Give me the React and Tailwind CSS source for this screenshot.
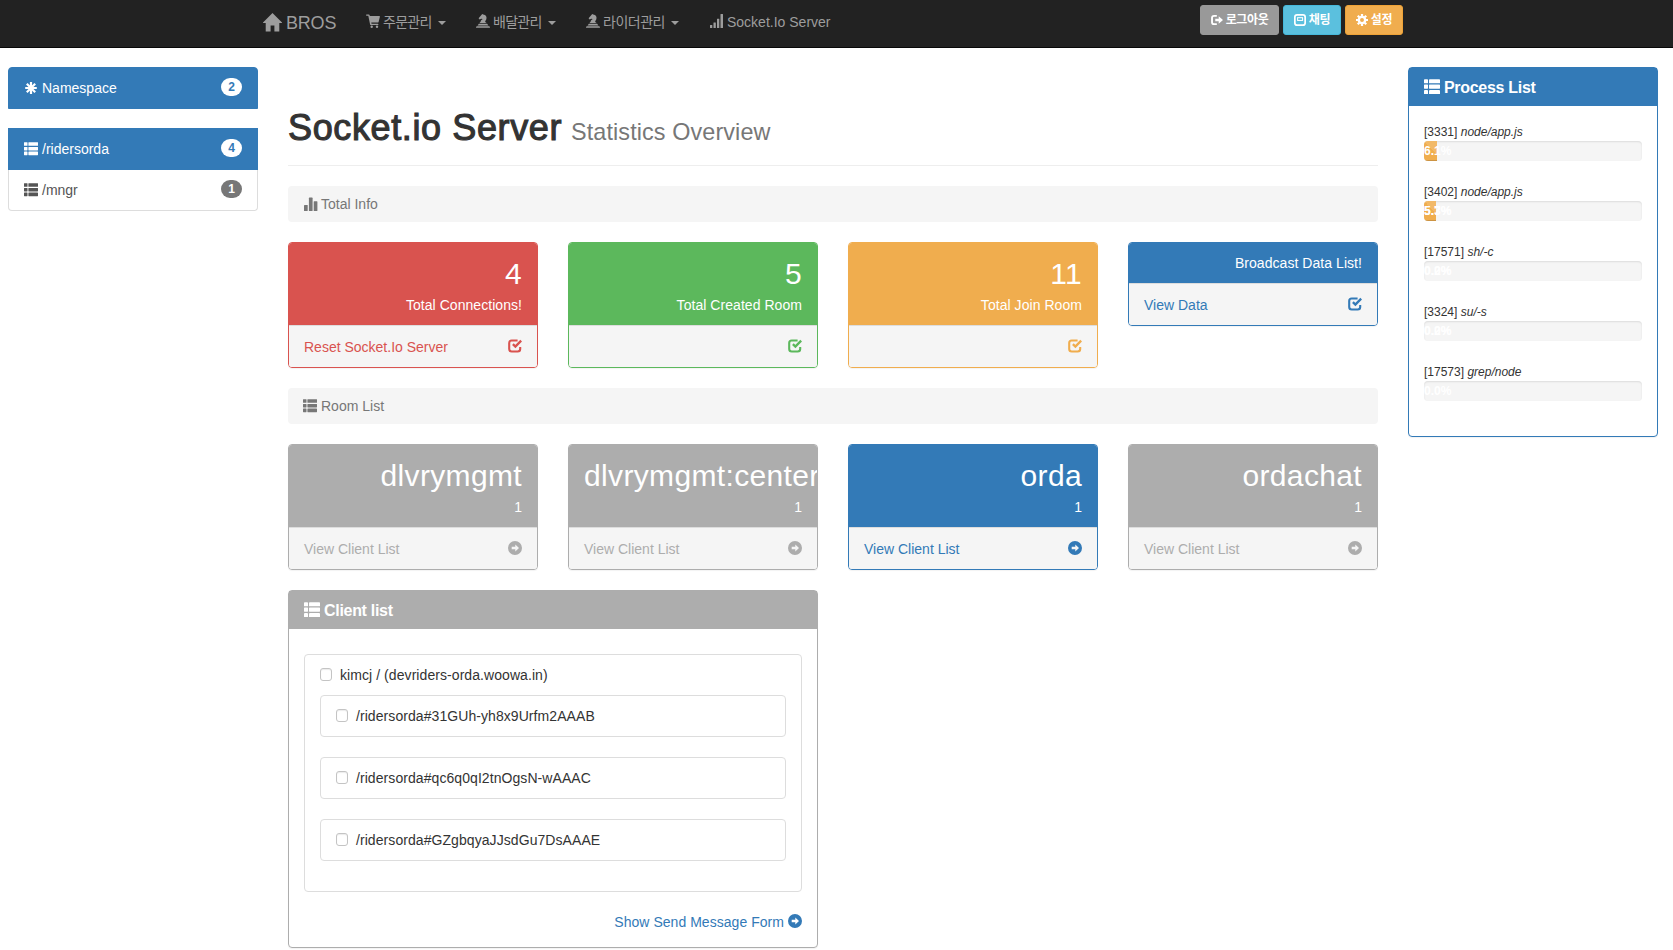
import React from "react";

/* ---------- icons, drawn on a 14 x 14 grid ---------- */
function Icon({ children, className = "size-3.5" }) {
  return (
    <svg viewBox="0 0 14 14" className={`shrink-0 ${className}`} fill="currentColor" aria-hidden="true">
      {children}
    </svg>
  );
}
const ThList = ({ className }) => (
  <Icon className={className}>
    <rect x="0" y="0.2" width="3.5" height="3.6" rx=".4" />
    <rect x="4.4" y="0.2" width="9.6" height="3.6" rx=".4" />
    <rect x="0" y="4.9" width="3.5" height="3.6" rx=".4" />
    <rect x="4.4" y="4.9" width="9.6" height="3.6" rx=".4" />
    <rect x="0" y="9.6" width="3.5" height="3.6" rx=".4" />
    <rect x="4.4" y="9.6" width="9.6" height="3.6" rx=".4" />
  </Icon>
);
const Home = ({ className }) => (
  <Icon className={className}>
    <path d="M7 0 14 7v.4h-2V13.6H8.4V9.2H5.6v4.4H2V7.4H0V7z" />
  </Icon>
);
const Cart = ({ className }) => (
  <Icon className={className}>
    <path d="M.6.4h2.2c.4 0 .7.2.8.6l.2 1H13.3c.5 0 .7.3.6.8l-1.300 5.200c-.1.4-.4.6-.8.6H5.300l.2 1.200h6.300c.8 0 .8 1.300 0 1.300H5c-.5 0-.8-.2-.9-.7L2.300 1.800H.6C-.2 1.800-.2.4.6.4z" />
    <circle cx="5.700" cy="12.700" r="1.200" />
    <circle cx="11" cy="12.700" r="1.200" />
  </Icon>
);
const Knight = ({ className }) => (
  <Icon className={className}>
    <path d="M6.200 0 7.200.6C9.900 1 11 2.900 10.400 5.100 10.100 6.300 9.200 6.900 9.200 7.900L10.600 9H3.500L4.600 7.800C4.700 6.700 5.300 6 6.700 5.100L5.200 4.700 3.600 5.500 2.600 4.300 5 1.500z" />
    <path d="M2.900 9.700h8.200l1.300 1.800H1.600zM.9 12.200h12.200c.6 0 .9.800.9 1.600H0c0-.8.3-1.600.9-1.600z" />
  </Icon>
);
const Signal = ({ className }) => (
  <Icon className={className}>
    <rect x="0" y="11" width="2.300" height="3" rx=".3" />
    <rect x="3.500" y="8.500" width="2.300" height="5.500" rx=".3" />
    <rect x="7" y="4.700" width="2.300" height="9.300" rx=".3" />
    <rect x="10.500" y="0" width="2.500" height="14" rx=".3" />
  </Icon>
);
const Stats = ({ className }) => (
  <Icon className={className}>
    <rect x="0" y="8" width="3.700" height="6" rx=".6" />
    <rect x="4.900" y="0.600" width="3.700" height="13.400" rx=".6" />
    <rect x="9.700" y="4.200" width="3.700" height="9.800" rx=".6" />
  </Icon>
);
const Check = ({ className }) => (
  <Icon className={className}>
    <path
      d="M9.600 1.500H3.700C2.200 1.500 1.200 2.500 1.200 4v6c0 1.500 1 2.500 2.500 2.500h6c1.500 0 2.500-1 2.500-2.500V7.900"
      fill="none"
      stroke="currentColor"
      strokeWidth="2.100"
    />
    <path d="M4.900 5.200 7.400 7.600 13.200 1.700" fill="none" stroke="currentColor" strokeWidth="2.400" />
  </Icon>
);
const ArrowCircle = ({ className }) => (
  <Icon className={className}>
    <path
      fillRule="evenodd"
      d="M7 0a7 7 0 1 1 0 14A7 7 0 0 1 7 0zM7.300 3.600v2.200H3.700v2.400h3.600v2.200L11 7z"
    />
  </Icon>
);
const Asterisk = ({ className }) => (
  <Icon className={className}>
    <path
      d="M7 1v12M1.200 7h11.600M2.800 2.800l8.400 8.400M11.200 2.800l-8.400 8.400"
      stroke="currentColor"
      strokeWidth="2.200"
    />
  </Icon>
);
const LogOut = ({ className }) => (
  <Icon className={className}>
    <path
      d="M6.800 2.200H3.600C2.200 2.200 1.200 3.100 1.200 4.500v5c0 1.400 1 2.300 2.400 2.300h3.200"
      fill="none"
      stroke="currentColor"
      strokeWidth="2.200"
    />
    <path d="M9 2.600 14 7 9 11.400V8.500H5V5.500h4z" />
  </Icon>
);
const Expand = ({ className }) => (
  <Icon className={className}>
    <rect x="1" y="1" width="12" height="12" rx="2.600" fill="none" stroke="currentColor" strokeWidth="2" />
    <rect x="4.200" y="4.300" width="5.800" height="3.200" fill="none" stroke="currentColor" strokeWidth="1.200" />
  </Icon>
);
const Cog = ({ className }) => (
  <Icon className={className}>
    <circle cx="7" cy="7" r="3.700" fill="none" stroke="currentColor" strokeWidth="2.800" />
    <path
      d="M7 0v2.500M7 11.500V14M0 7h2.500M11.500 7H14M2.050 2.050l1.800 1.800M10.150 10.150l1.800 1.800M11.950 2.050l-1.800 1.800M3.850 10.150l-1.800 1.800"
      stroke="currentColor"
      strokeWidth="2.600"
    />
  </Icon>
);
const Caret = () => (
  <svg viewBox="0 0 8 4" className="ml-1.5 mt-0.5 h-1 w-2 shrink-0" fill="currentColor" aria-hidden="true">
    <path d="M0 0h8L4 4z" />
  </svg>
);

/* ---------- navigation ---------- */
function NavItem({ icon: Glyph, label, width, caret = true, text = "" }) {
  return (
    <a className={`flex items-center ${width}`}>
      <Glyph className="mb-px mr-[3px] size-3.5" />
      <span className={text}>{label}</span>
      {caret && <Caret />}
    </a>
  );
}

function NavButton({ icon: Glyph, label, className }) {
  return (
    <button
      className={`flex h-[30px] items-center justify-center gap-[3px] rounded-[3px] border text-[12px] font-bold leading-none tracking-[-0.4px] text-white ${className}`}
    >
      <Glyph className="size-3" />
      <span>{label}</span>
    </button>
  );
}

function Navbar() {
  return (
    <header className="flex h-12 border-b border-[#080808] bg-[#222] text-[#9d9d9d]">
      <a className="ml-[263px] flex h-11 w-[103px] items-center text-[18px]">
        <Home className="mr-1 size-[19px]" />
        <span className="pt-0.5 tracking-[-0.2px]">BROS</span>
      </a>
      <nav className="flex h-[43px] items-center text-[14px]">
        <NavItem icon={Cart} label="주문관리" width="w-[110px]" text="tracking-[-0.7px]" />
        <NavItem icon={Knight} label="배달관리" width="w-[110px]" text="tracking-[-0.7px]" />
        <NavItem icon={Knight} label="라이더관리" width="w-[124px]" text="tracking-[-0.5px]" />
        <NavItem icon={Signal} label="Socket.Io Server" width="w-[130px]" caret={false} text="pt-px whitespace-nowrap" />
      </nav>
      <div className="ml-[360px] mt-[5px] flex gap-1">
        <NavButton icon={LogOut} label="로그아웃" className="w-[79px] border-[#999] bg-[#999]" />
        <NavButton icon={Expand} label="채팅" className="w-[58px] border-[#46b8da] bg-[#5bc0de]" />
        <NavButton icon={Cog} label="설정" className="w-[58px] border-[#eea236] bg-[#f0ad4e]" />
      </div>
    </header>
  );
}

/* ---------- sidebar ---------- */
function SideItem({ icon: Glyph, label, count, className, badge }) {
  return (
    <a className={`flex items-center border px-[15px] ${className}`}>
      <Glyph className="mb-px mr-1 size-3.5" />
      <span>{label}</span>
      <span
        className={`mb-0.5 ml-auto flex h-[18px] w-[21px] items-center justify-center rounded-[10px] text-[12px] font-bold leading-none ${badge}`}
      >
        {count}
      </span>
    </a>
  );
}

function Sidebar() {
  return (
    <aside className="mt-[19px] w-[250px]">
      <SideItem
        icon={Asterisk}
        label="Namespace"
        count={2}
        className="h-[42px] rounded-t border-[#337ab7] bg-[#337ab7] text-white"
        badge="bg-white text-[#337ab7]"
      />
      <div className="mt-[19px]">
        <SideItem
          icon={ThList}
          label="/ridersorda"
          count={4}
          className="h-[42px] border-[#337ab7] bg-[#337ab7] text-white"
          badge="bg-white text-[#337ab7]"
        />
        <SideItem
          icon={ThList}
          label="/mngr"
          count={1}
          className="h-[41px] rounded-b border-t-0 border-[#ddd] text-[#555]"
          badge="bg-[#777] text-white"
        />
      </div>
    </aside>
  );
}

/* ---------- main column ---------- */
function Crumb({ icon: Glyph, className, children }) {
  return (
    <div className={`flex h-9 items-center rounded bg-[#f5f5f5] text-[#777] ${className}`}>
      <Glyph className="mb-px size-3.5" />
      <span>{children}</span>
    </div>
  );
}

const TONES = {
  red: { box: "border-[#d9534f]", head: "bg-[#d9534f]", text: "text-[#d9534f]" },
  green: { box: "border-[#5cb85c]", head: "bg-[#5cb85c]", text: "text-[#5cb85c]" },
  amber: { box: "border-[#f0ad4e]", head: "bg-[#f0ad4e]", text: "text-[#f0ad4e]" },
  blue: { box: "border-[#337ab7]", head: "bg-[#337ab7]", text: "text-[#337ab7]" },
  gray: { box: "border-[#adadad]", head: "bg-[#adadad]", text: "text-[#adadad]" },
};

function Card({ tone, big, small, link, icon: Glyph }) {
  const t = TONES[tone];
  return (
    <section className={`overflow-hidden rounded border shadow-[0_1px_1px_rgba(0,0,0,0.05)] ${t.box}`}>
      <div className={`px-[15px] py-2.5 text-right text-white ${t.head}`}>
        {big && <div className="h-[42px] whitespace-nowrap text-[30px] leading-[42px] tracking-[0.35px]">{big}</div>}
        <div className="tracking-[0.05px]">{small}</div>
      </div>
      <div className={`flex h-[42px] items-center justify-between border-t border-[#ddd] bg-[#f5f5f5] px-[15px] ${t.text}`}>
        <span>{link}</span>
        <Glyph className="mb-0.5 size-3.5" />
      </div>
    </section>
  );
}

const Box = () => (
  <span className="mb-px h-[13px] w-3 shrink-0 rounded-[3px] border border-[#c4c4c4] bg-white shadow-[inset_0_1px_1px_rgba(0,0,0,0.08)]" />
);

const SOCKETS = [
  "/ridersorda#31GUh-yh8x9Urfm2AAAB",
  "/ridersorda#qc6q0qI2tnOgsN-wAAAC",
  "/ridersorda#GZgbqyaJJsdGu7DsAAAE",
];

function ClientPanel() {
  return (
    <section className="mt-5 h-[358px] w-[530px] rounded border border-[#adadad] shadow-[0_1px_1px_rgba(0,0,0,0.05)]">
      <h3 className="flex h-[38px] items-center bg-[#adadad] px-[15px] text-[16px] font-bold text-white">
        <ThList className="mr-1 size-4" />
        <span className="pt-px tracking-[-0.3px]">Client list</span>
      </h3>
      <div className="px-[15px] pt-[25px]">
        <div className="h-[238px] rounded border border-[#ddd] px-[15px] pt-2.5 tracking-[0.07px]">
          <div className="flex h-5 items-center gap-2">
            <Box />
            <span>kimcj / (devriders-orda.woowa.in)</span>
          </div>
          <div className="mt-2.5 flex flex-col gap-5">
            {SOCKETS.map((id) => (
              <div key={id} className="flex h-[42px] items-center gap-2 rounded border border-[#ddd] px-[15px]">
                <Box />
                <span>{id}</span>
              </div>
            ))}
          </div>
        </div>
        <a className="mt-5 flex h-5 items-center justify-end gap-1 text-[#337ab7]">
          <span className="tracking-[0.04px]">Show Send Message Form</span>
          <ArrowCircle className="mb-0.5 size-3.5" />
        </a>
      </div>
    </section>
  );
}

function Main() {
  return (
    <main className="ml-[30px] w-[1090px] pt-[58px]">
      <h1 className="flex h-[60px] items-baseline gap-[9px] border-b border-[#eee] text-[36px] font-normal leading-[44px] text-[#333]">
        <span className="tracking-[0.62px] [-webkit-text-stroke:1.1px_#333]">Socket.io Server</span>
        <small className="text-[23.4px] tracking-[0.1px] text-[#777]">Statistics Overview</small>
      </h1>
      <div className="mt-5">
        <Crumb icon={Stats} className="gap-[3px] px-4">Total Info</Crumb>
      </div>
      <div className="mt-5 grid grid-cols-4 items-start gap-[30px]">
        <Card tone="red" big="4" small="Total Connections!" link="Reset Socket.Io Server" icon={Check} />
        <Card tone="green" big="5" small="Total Created Room" icon={Check} />
        <Card tone="amber" big="11" small="Total Join Room" icon={Check} />
        <Card tone="blue" small="Broadcast Data List!" link="View Data" icon={Check} />
      </div>
      <div className="mt-5">
        <Crumb icon={ThList} className="gap-1 px-[15px]">Room List</Crumb>
      </div>
      <div className="mt-5 grid grid-cols-4 items-start gap-[30px]">
        <Card tone="gray" big="dlvrymgmt" small="1" link="View Client List" icon={ArrowCircle} />
        <Card tone="gray" big="dlvrymgmt:center" small="1" link="View Client List" icon={ArrowCircle} />
        <Card tone="blue" big="orda" small="1" link="View Client List" icon={ArrowCircle} />
        <Card tone="gray" big="ordachat" small="1" link="View Client List" icon={ArrowCircle} />
      </div>
      <ClientPanel />
    </main>
  );
}

/* ---------- process list ---------- */
/* `previous` is the outgoing reading, still visible under the current one. */
const PROCESSES = [
  { pid: "[3331]", name: "node/app.js", label: "6.1%", value: 6.1 },
  { pid: "[3402]", name: "node/app.js", label: "5.7%", previous: "5.3%", value: 5.7 },
  { pid: "[17571]", name: "sh/-c", label: "0.0%", previous: "0.2%", value: 0 },
  { pid: "[3324]", name: "su/-s", label: "0.0%", previous: "0.2%", value: 0 },
  { pid: "[17573]", name: "grep/node", label: "0.0%", value: 0 },
];

function ProcessPanel() {
  return (
    <aside className="ml-[30px] mt-[19px] h-[370px] w-[250px] rounded border border-[#337ab7] text-[12px] shadow-[0_1px_1px_rgba(0,0,0,0.05)]">
      <h3 className="flex h-[38px] items-center bg-[#337ab7] px-[15px] text-[16px] font-bold text-white">
        <ThList className="mr-1 size-4" />
        <span className="pt-0.5 tracking-[-0.3px]">Process List</span>
      </h3>
      <div className="flex flex-col gap-5 px-[15px] pt-[15px]">
        {PROCESSES.map((p) => (
          <div key={p.pid} className="h-10">
            <div className="h-5 pt-px leading-5 text-[#333]">
              {p.pid} <em>{p.name}</em>
            </div>
            <div className="relative h-5 overflow-hidden rounded bg-[#f5f5f5] font-bold leading-5 text-white shadow-[inset_0_1px_2px_rgba(0,0,0,0.1)]">
              <div
                className="h-5 whitespace-nowrap bg-[#f0ad4e] bg-[linear-gradient(45deg,rgba(255,255,255,.15)_25%,transparent_25%,transparent_50%,rgba(255,255,255,.15)_50%,rgba(255,255,255,.15)_75%,transparent_75%,transparent)] bg-[length:40px_40px] shadow-[inset_0_-1px_0_rgba(0,0,0,0.15)]"
                style={{ width: `${p.value}%` }}
              >
                {p.label}
              </div>
              {p.previous && <span className="absolute left-0 top-0">{p.previous}</span>}
            </div>
          </div>
        ))}
      </div>
    </aside>
  );
}

export default function App() {
  return (
    <div className="h-[950px] w-[1673px] overflow-hidden bg-white font-['Liberation_Sans','Noto_Sans_CJK_KR',sans-serif] text-[14px] leading-5 text-[#333]">
      <Navbar />
      <div className="flex items-start pl-2">
        <Sidebar />
        <Main />
        <ProcessPanel />
      </div>
    </div>
  );
}
